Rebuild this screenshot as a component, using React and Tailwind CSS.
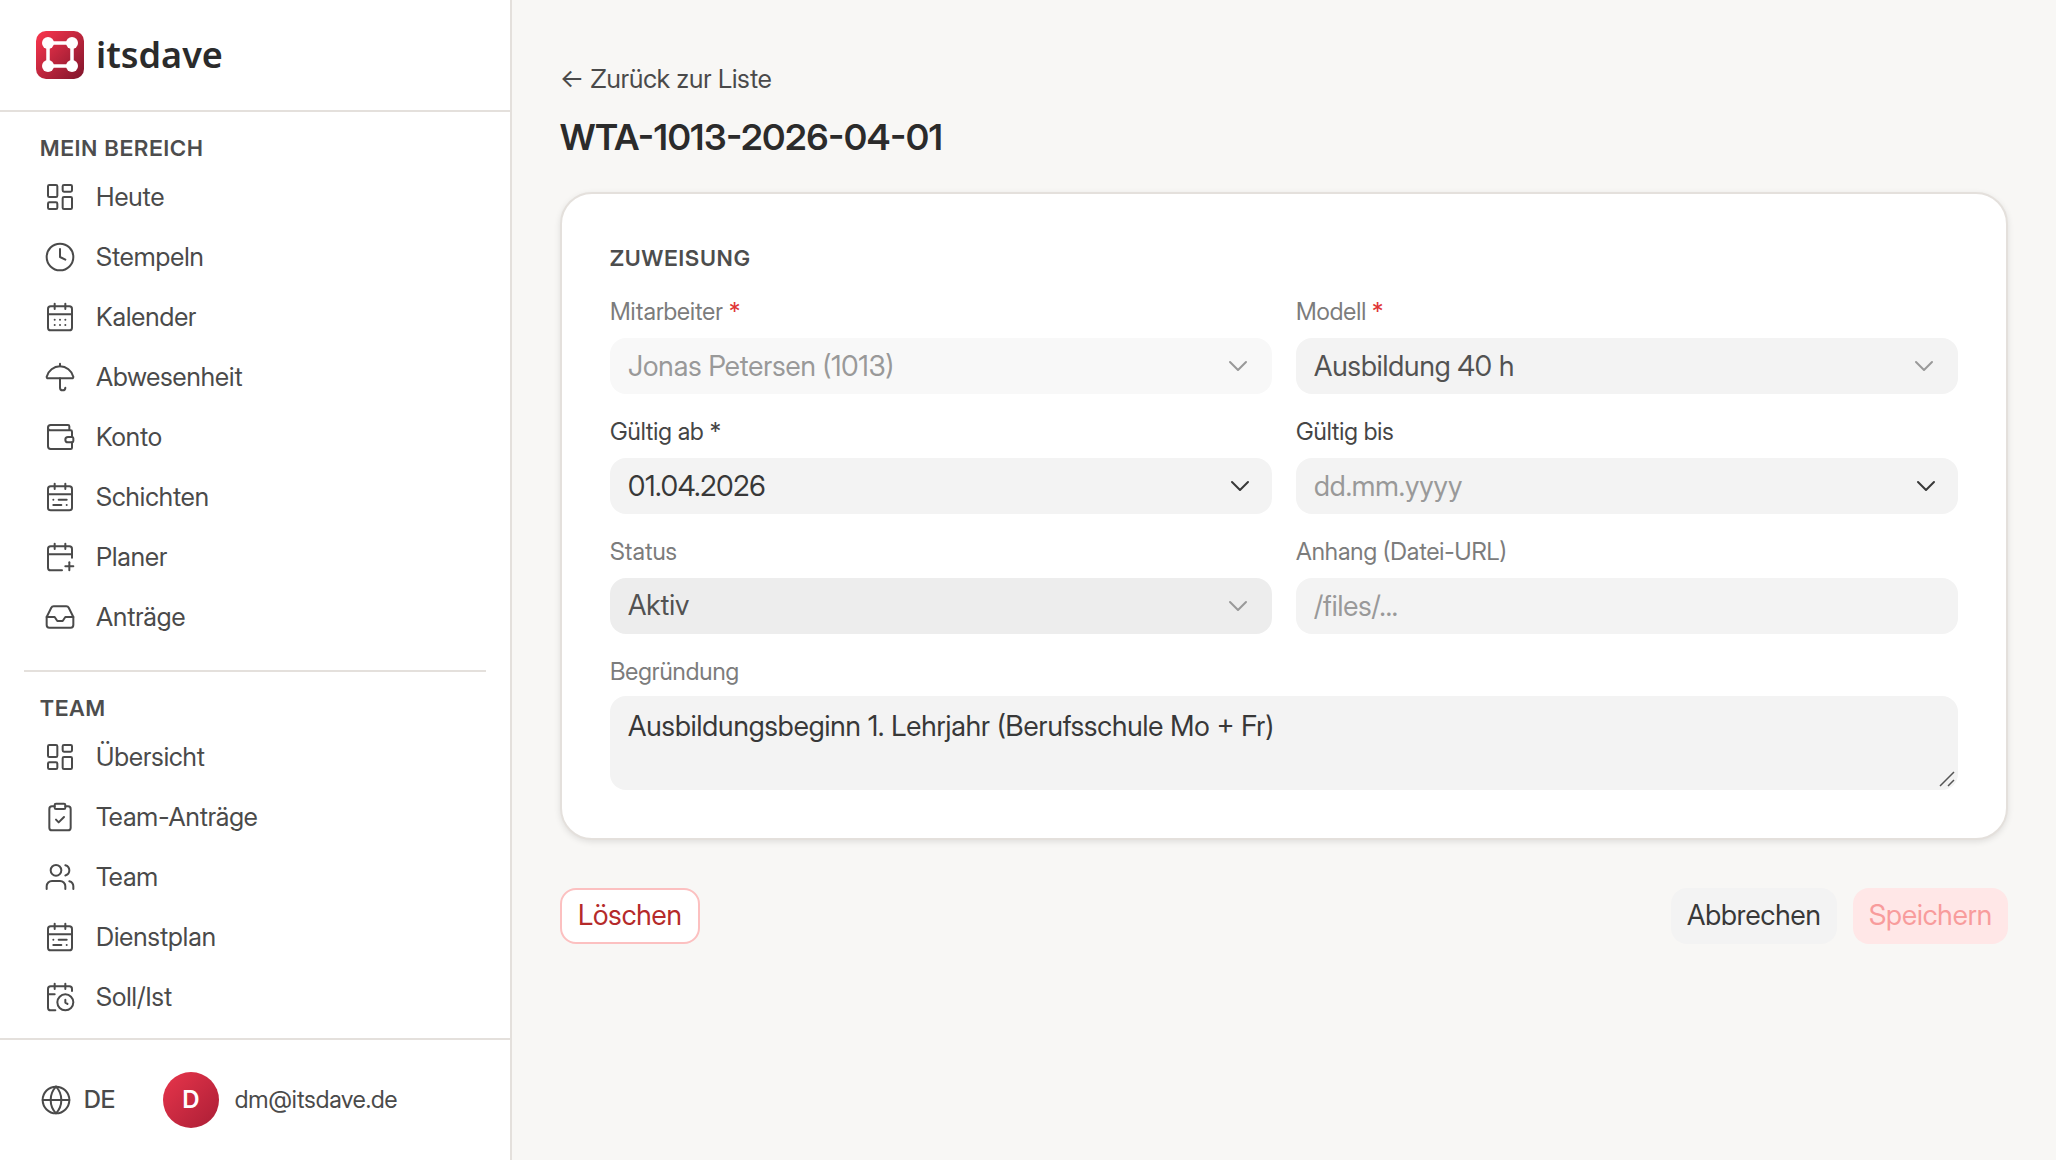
import React from 'react'
import {
  CalendarClock,
  CalendarDays,
  CalendarPlus,
  CalendarRange,
  ChevronDown,
  ClipboardCheck,
  Clock,
  Globe,
  Inbox,
  LayoutDashboard,
  Umbrella,
  Users,
  Wallet,
} from 'lucide-react'

const personalItems = [
  { label: 'Heute', icon: LayoutDashboard },
  { label: 'Stempeln', icon: Clock },
  { label: 'Kalender', icon: CalendarDays },
  { label: 'Abwesenheit', icon: Umbrella },
  { label: 'Konto', icon: Wallet },
  { label: 'Schichten', icon: CalendarRange },
  { label: 'Planer', icon: CalendarPlus },
  { label: 'Anträge', icon: Inbox },
]

const teamItems = [
  { label: 'Übersicht', icon: LayoutDashboard },
  { label: 'Team-Anträge', icon: ClipboardCheck },
  { label: 'Team', icon: Users },
  { label: 'Dienstplan', icon: CalendarRange },
  { label: 'Soll/Ist', icon: CalendarClock },
]

function Logo() {
  return (
    <svg viewBox="0 0 48 48" className="w-12 h-12" aria-hidden="true">
      <defs>
        <linearGradient id="logo-bg" x1="0" y1="0" x2="1" y2="1">
          <stop offset="0.1" stopColor="#f0334b" />
          <stop offset="1" stopColor="#7f152b" />
        </linearGradient>
      </defs>
      <rect width="48" height="48" rx="10" fill="url(#logo-bg)" />
      <rect x="12" y="12" width="24" height="23" fill="none" stroke="#fff" strokeWidth="3.5" />
      <circle cx="12" cy="12" r="6" fill="#fff" />
      <circle cx="36" cy="12" r="6" fill="#fff" />
      <circle cx="12" cy="35" r="6" fill="#fff" />
      <circle cx="36" cy="35" r="6" fill="#fff" />
    </svg>
  )
}

function NavSection({ title, items }) {
  return (
    <section className="pt-5">
      <h2 className="px-10 mb-[3px] text-[22px] leading-8 font-semibold tracking-wider text-[#4d4d4d]">
        {title}
      </h2>
      <ul>
        {items.map(({ label, icon: Icon }) => (
          <li key={label}>
            <a href="#" className="flex items-center gap-5 h-15 px-11 text-[26px] text-[#4a4a4a]">
              <Icon className="w-8 h-8" strokeWidth={1.5} />
              <span className="pb-0.5">{label}</span>
            </a>
          </li>
        ))}
      </ul>
    </section>
  )
}

function Sidebar() {
  return (
    <aside className="w-128 h-screen shrink-0 flex flex-col bg-white border-r-2 border-[#e4e0dc]">
      <div className="h-28 shrink-0 flex items-center gap-3 px-9 border-b-2 border-[#e4e0dc]">
        <Logo />
        <span className="font-['Noto_Sans',sans-serif] text-[36px] leading-none font-semibold text-[#2b2b2b]">
          itsdave
        </span>
      </div>

      <nav className="flex-1 overflow-hidden">
        <NavSection title="MEIN BEREICH" items={personalItems} />
        <hr className="mx-6 mt-[23px] border-0 h-0.5 bg-[#e4e0dc]" />
        <NavSection title="TEAM" items={teamItems} />
      </nav>

      <div className="shrink-0 flex items-center h-[122px] px-10 border-t-2 border-[#e4e0dc] text-[24px] text-[#4a4a4a]">
        <button type="button" className="flex items-center gap-3 font-medium">
          <Globe className="w-8 h-8" strokeWidth={1.5} />
          DE
        </button>
        <div className="flex items-center gap-4 ml-12">
          <span className="w-14 h-14 rounded-full flex items-center justify-center bg-linear-to-br from-[#e8354b] to-[#ab1e36] text-white font-semibold">
            D
          </span>
          <span>dm@itsdave.de</span>
        </div>
      </div>
    </aside>
  )
}

function Label({ htmlFor, strong, required, children }) {
  return (
    <label
      htmlFor={htmlFor}
      className={`text-[24px] leading-7 ${strong ? 'text-[#454545]' : 'text-[#7c7c7c]'}`}
    >
      {children}
      {required && <span className="text-[#e03636]"> *</span>}
    </label>
  )
}

const control = 'w-full h-14 px-[18px] rounded-2xl text-[28px] appearance-none outline-none'

function SelectField({ id, label, value, required, disabled, tone }) {
  return (
    <div className="flex flex-col gap-3">
      <Label htmlFor={id} required={required}>
        {label}
      </Label>
      <div className="relative">
        <select id={id} disabled={disabled} defaultValue={value} className={`${control} block opacity-100 ${tone}`}>
          <option>{value}</option>
        </select>
        <ChevronDown
          className="absolute right-[18px] top-3 w-8 h-8 text-[#999999] pointer-events-none"
          strokeWidth={1.5}
        />
      </div>
    </div>
  )
}

function DateField({ id, label, value }) {
  return (
    <div className="flex flex-col gap-3">
      <Label htmlFor={id} strong>
        {label}
      </Label>
      <div className="relative">
        <input
          id={id}
          type="text"
          defaultValue={value}
          placeholder="dd.mm.yyyy"
          className={`${control} block bg-[#f3f3f3] text-[#383838] placeholder:text-[#999999]`}
        />
        <ChevronDown
          className="absolute right-4 top-3 w-8 h-8 text-[#383838] pointer-events-none"
          strokeWidth={1.5}
        />
      </div>
    </div>
  )
}

function AssignmentCard() {
  return (
    <section className="mt-8 p-12 bg-white border-2 border-[#e4e0dc] rounded-[32px] shadow-[0_2px_6px_rgba(0,0,0,0.1)]">
      <h2 className="mb-6 text-[22px] leading-8 font-semibold tracking-wider text-[#4d4d4d]">
        ZUWEISUNG
      </h2>
      <div className="grid grid-cols-2 gap-6">
        <SelectField
          id="employee"
          label="Mitarbeiter"
          value="Jonas Petersen (1013)"
          required
          disabled
          tone="bg-[#f8f8f8] text-[#999999]"
        />
        <SelectField
          id="model"
          label="Modell"
          value="Ausbildung 40 h"
          required
          tone="bg-[#f3f3f3] text-[#525252]"
        />
        <DateField id="valid-from" label="Gültig ab *" value="01.04.2026" />
        <DateField id="valid-to" label="Gültig bis" />
        <SelectField id="status" label="Status" value="Aktiv" tone="pb-0.5 bg-[#ededed] text-[#525252]" />
        <div className="flex flex-col gap-3">
          <Label htmlFor="attachment">Anhang (Datei-URL)</Label>
          <input
            id="attachment"
            type="text"
            placeholder="/files/..."
            className={`${control} bg-[#f3f3f3] text-[#383838] placeholder:text-[#999999]`}
          />
        </div>
        <div className="col-span-2 flex flex-col gap-2.5">
          <Label htmlFor="reason">Begründung</Label>
          <div className="relative">
            <textarea
              id="reason"
              defaultValue="Ausbildungsbeginn 1. Lehrjahr (Berufsschule Mo + Fr)"
              className="block w-full h-[94px] px-[18px] py-3 rounded-2xl resize-none outline-none bg-[#f3f3f3] text-[28px] leading-9 text-[#383838]"
            />
            <svg
              viewBox="0 0 16 16"
              className="absolute right-[3px] bottom-[3px] w-4 h-4 text-[#555555] pointer-events-none"
              fill="none"
              stroke="currentColor"
              strokeWidth="1.5"
            >
              <path d="M1 15 15 1M9 15l6-6" />
            </svg>
          </div>
        </div>
      </div>
    </section>
  )
}

export default function App() {
  return (
    <div className="flex min-h-screen bg-[#f8f7f5] font-['Inter_Display','Inter',sans-serif]">
      <Sidebar />
      <main className="flex-1 min-w-0 px-12 pt-15 pb-12">
        <a href="#" className="block w-fit text-[26px] leading-[38px] text-[#4a4a4a]">
          ← Zurück zur Liste
        </a>
        <h1 className="mt-4 text-[36px] leading-[46px] font-semibold text-[#2b2b2b]">
          WTA-1013-2026-04-01
        </h1>
        <AssignmentCard />
        <div className="mt-12 flex items-center gap-4 text-[28px]">
          <button
            type="button"
            className="h-14 px-4 pb-0.5 mr-auto rounded-2xl border-2 border-[#fcc0c0] bg-white text-[#b52a2a]"
          >
            Löschen
          </button>
          <button type="button" className="h-14 px-4 pb-0.5 rounded-2xl bg-[#f3f3f3] text-[#383838]">
            Abbrechen
          </button>
          <button type="button" disabled className="h-14 px-4 pb-0.5 rounded-2xl bg-[#ffe7e7] text-[#f89c9c]">
            Speichern
          </button>
        </div>
      </main>
    </div>
  )
}
